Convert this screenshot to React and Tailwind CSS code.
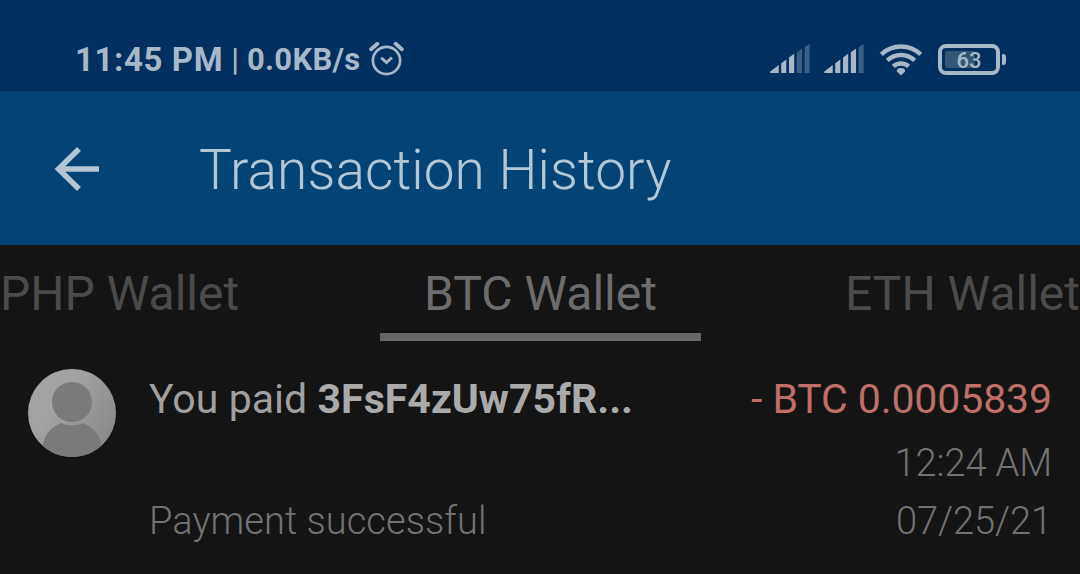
import React from "react";

const tabs = [
  { label: "PHP Wallet", className: "w-[380px] justify-start border-transparent text-[#4b4b4b]" },
  { label: "BTC Wallet", className: "w-[321px] justify-center border-[#666666] text-[#6c6c6c]" },
  { label: "ETH Wallet", className: "w-[379px] justify-end border-transparent text-[#4b4b4b]" },
];

function AlarmIcon() {
  return (
    <svg width="35" height="35" viewBox="0 0 36 36" fill="none" stroke="currentColor">
      <circle cx="18" cy="19" r="14" strokeWidth="2.8" />
      <path d="M2.2 7.4L8.6 1.9M27.4 1.9L33.8 7.4" strokeWidth="4" strokeLinecap="round" />
      <path d="M12.6 16.2L18 21.2L23.6 16" strokeWidth="3" />
    </svg>
  );
}

function SignalIcon({ strength }) {
  const bars = [
    "M0 27.8L9 21V29H1Q0 29 0 27.8Z",
    "M11.5 19.2L16.7 15.5V29H11.5Z",
    "M19.5 13.6L24.8 9.8V29H19.5Z",
    "M27.5 8.2L32.8 4.6V29H27.5Z",
    "M35.5 3L40.6 0V29H35.5Z",
  ];

  return (
    <svg width="40" height="29" viewBox="0 0 41 29" preserveAspectRatio="none" fill="currentColor">
      {bars.map((bar, index) => (
        <path key={bar} d={bar} opacity={index < strength ? 1 : 0.35} />
      ))}
    </svg>
  );
}

function WifiIcon() {
  return (
    <svg width="44" height="32" viewBox="0 0 44 32" fill="none" stroke="currentColor" strokeWidth="4.4">
      <path d="M2.3 10.4A28.5 28.5 0 0 1 41.7 10.4" />
      <path d="M8.3 16.4A20 20 0 0 1 35.7 16.4" />
      <path d="M14.3 22.4A11.5 11.5 0 0 1 29.7 22.4" />
      <path d="M17.8 27.4A4.2 3.4 0 0 1 26.2 27.4L22 31.4Z" fill="currentColor" stroke="none" />
    </svg>
  );
}

function Battery({ level }) {
  return (
    <div className="flex items-center gap-[2px]">
      <div className="relative flex h-[31px] w-[62px] items-center justify-center rounded-[8px] border-4 border-current p-[3px]">
        <div className="absolute inset-[3px]">
          <div className="h-full rounded-[2px] bg-[#325877]" style={{ width: `${level}%` }} />
        </div>
        <span className="relative pt-[2px] text-[22px] leading-none font-medium">{level}</span>
      </div>
      <div className="h-[11px] w-[4px] rounded-r-[3px] rounded-l-[1px] bg-current" />
    </div>
  );
}

function StatusBar() {
  return (
    <div className="flex h-[91px] items-center justify-between bg-[#012f60] pt-[28px] pr-[74px] pl-[75px] text-[#a7b8c8]">
      <div className="flex items-center">
        <span className="pt-px text-[33px] font-bold tracking-[0.6px]">11:45 PM</span>
        <span className="ml-[8px] pt-px text-[31px] font-medium">|</span>
        <span className="ml-[8px] pt-[2px] text-[31px] font-bold tracking-[0.3px]">0.0KB/s</span>
        <span className="ml-[8px]"><AlarmIcon /></span>
      </div>
      <div className="flex items-center">
        <span className="pb-[2px]"><SignalIcon strength={3} /></span>
        <span className="ml-[14px] pb-[2px]"><SignalIcon strength={4} /></span>
        <span className="ml-[15px]"><WifiIcon /></span>
        <span className="ml-[15px]"><Battery level={63} /></span>
      </div>
    </div>
  );
}

function Header() {
  return (
    <header className="flex h-[154px] items-center bg-[#034375] pl-[54px] text-[#b3c7d6]">
      <svg width="46" height="47" viewBox="0 0 46 47" fill="none" stroke="currentColor" strokeWidth="5.4">
        <path d="M45 24H4M25 4L4.5 24L25 44" />
      </svg>
      <h1 className="ml-[99px] pt-[5px] text-[55px] leading-none font-light tracking-[0.1px]">Transaction History</h1>
    </header>
  );
}

function WalletTabs() {
  return (
    <nav className="flex h-[96px] overflow-hidden">
      {tabs.map((tab) => (
        <div
          key={tab.label}
          className={`flex items-center border-b-8 pt-[9px] text-[48px] leading-none whitespace-nowrap ${tab.className}`}
        >
          {tab.label}
        </div>
      ))}
    </nav>
  );
}

function Avatar() {
  return (
    <svg width="88" height="88" viewBox="0 0 88 88" className="shrink-0">
      <defs>
        <linearGradient id="avatar-bg" gradientUnits="userSpaceOnUse" x1="0" y1="0" x2="88" y2="62">
          <stop offset="0.4" stopColor="#a3a3a3" />
          <stop offset="1" stopColor="#89898b" />
        </linearGradient>
        <clipPath id="avatar-clip">
          <circle cx="44" cy="44" r="44" />
        </clipPath>
      </defs>
      <g clipPath="url(#avatar-clip)">
        <rect width="88" height="88" fill="url(#avatar-bg)" />
        <ellipse cx="44" cy="81" rx="30" ry="29" fill="#7a7a7d" />
        <circle cx="44" cy="33" r="23.5" fill="url(#avatar-bg)" />
        <circle cx="44" cy="33" r="20" fill="#7a7a7d" />
      </g>
    </svg>
  );
}

function Transaction() {
  return (
    <div className="flex pt-[28px] pr-[28px] pl-[28px]">
      <Avatar />
      <div className="ml-[33px] flex flex-1 flex-col justify-between">
        <p className="pt-[6px] text-[41px] leading-[48px] tracking-[0.05px] text-[#a0a0a0]">
          You paid <b className="font-bold text-[#aaaaaa]">3FsF4zUw75fR...</b>
        </p>
        <p className="text-[38px] leading-[58px] font-light tracking-[0.05px] text-[#737373]">Payment successful</p>
      </div>
      <div className="flex flex-col items-end text-[38px] leading-[58px] font-light tracking-[-0.1px] text-[#737373]">
        <p className="mb-[11px] pt-[6px] text-[41px] leading-[48px] font-normal tracking-[-0.1px] text-[#bd6f68]">- BTC 0.0005839</p>
        <p>12:24 AM</p>
        <p>07/25/21</p>
      </div>
    </div>
  );
}

export default function App() {
  return (
    <div className="h-[574px] w-[1080px] overflow-hidden bg-[#141414] font-['Roboto',sans-serif]">
      <StatusBar />
      <Header />
      <WalletTabs />
      <Transaction />
    </div>
  );
}
